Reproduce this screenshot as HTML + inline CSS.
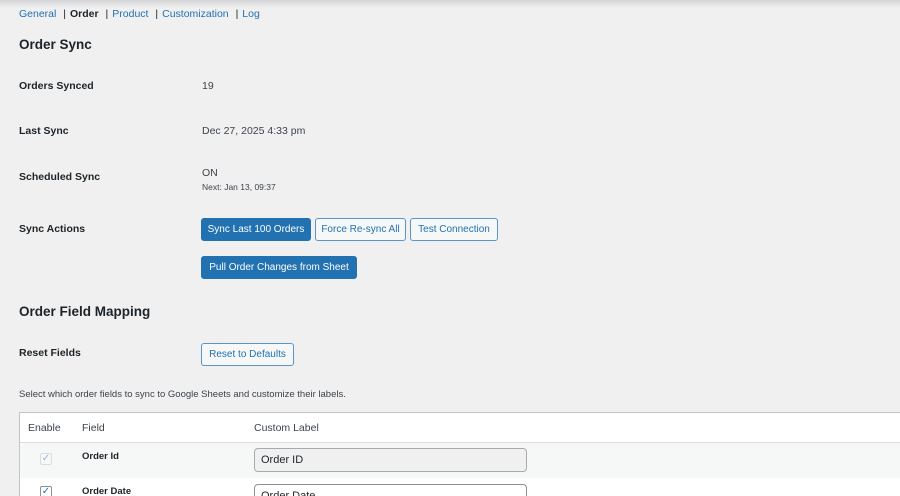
<!DOCTYPE html>
<html style="overflow:hidden;height:496px"><head><meta charset="utf-8"><style>
*{box-sizing:border-box;margin:0;padding:0}
body{width:900px;height:496px;overflow:hidden;background:#f0f0f1;font-family:"Liberation Sans",sans-serif;color:#1d2327;font-size:11px;position:relative}
.shadow{position:absolute;left:0;top:0;width:900px;height:8px;background:linear-gradient(#d4d4d6,#f0f0f1)}
.a{position:absolute;white-space:nowrap}
.nav{top:8px;left:19px;font-size:10.5px;color:#2271b1}
.nav b{color:#1d2327}
.nav .s{color:#1d2327;margin:0 4px}
h2{position:absolute;font-size:13.5px;font-weight:bold;left:19px}
.lbl{left:19px;font-weight:bold;font-size:10.5px}
.val{left:202px;font-size:10.5px;color:#3c434a}
.btn{position:absolute;height:23px;border:1px solid #5a94c8;border-radius:3px;font-size:10px;line-height:21px;text-align:center;color:#2271b1;background:#f6f7f7;white-space:nowrap}
.p{background:#2271b1;color:#fff;border-color:#2271b1}
.tbl{position:absolute;left:19px;top:412px;width:890px;height:100px;border:1px solid #c3c4c7;background:#fff}
.r1{position:absolute;left:0;top:29px;width:100%;height:36px;background:#f6f7f7;border-top:1px solid #dcdcde}
.inp{position:absolute;left:234px;width:273px;height:24px;border:1px solid #8c8f94;border-radius:4px;font-size:11px;padding-left:6px;line-height:22px}
.cb{position:absolute;left:20px;width:12px;height:12px;border:1px solid #8c8f94;border-radius:2px;font-size:10px;line-height:10px;text-align:center;color:#2271b1;background:#fff}
</style></head><body>
<div class="shadow"></div>
<div class="a nav">General <span class="s">|</span><b>Order</b> <span class="s"> |</span>Product <span class="s"> |</span>Customization <span class="s"> |</span>Log</div>
<h2 style="top:37px">Order Sync</h2>
<div class="a lbl" style="top:80px">Orders Synced</div><div class="a val" style="top:80px">19</div>
<div class="a lbl" style="top:125px">Last Sync</div><div class="a val" style="top:125px">Dec 27, 2025 4:33 pm</div>
<div class="a lbl" style="top:171px">Scheduled Sync</div><div class="a val" style="top:167px">ON</div>
<div class="a val" style="top:182px;font-size:8.5px;color:#3c434a">Next: Jan 13, 09:37</div>
<div class="a lbl" style="top:223px">Sync Actions</div>
<div class="btn p" style="left:201px;top:218px;width:110px">Sync Last 100 Orders</div>
<div class="btn" style="left:315px;top:218px;width:91px">Force Re-sync All</div>
<div class="btn" style="left:410px;top:218px;width:88px">Test Connection</div>
<div class="btn p" style="left:201px;top:256px;width:156px">Pull Order Changes from Sheet</div>
<h2 style="top:304px">Order Field Mapping</h2>
<div class="a lbl" style="top:347px">Reset Fields</div>
<div class="btn" style="left:201px;top:343px;width:93px">Reset to Defaults</div>
<div class="a" style="left:19px;top:389px;font-size:9.5px;color:#3c434a">Select which order fields to sync to Google Sheets and customize their labels.</div>
<div class="tbl">
<div class="a" style="left:8px;top:9px;font-size:10.5px;color:#3c434a">Enable</div>
<div class="a" style="left:62px;top:9px;font-size:10.5px;color:#3c434a">Field</div>
<div class="a" style="left:234px;top:9px;font-size:10.5px;color:#3c434a">Custom Label</div>
<div class="r1">
<div class="cb" style="top:10px;border-color:#dcdcde;color:#8fb8d9;background:#f6f7f7">✓</div>
<div class="a" style="left:62px;top:8px;font-weight:bold;font-size:9.5px">Order Id</div>
<div class="inp" style="top:5px;background:#f0f0f1;border-color:#a7aaad">Order ID</div>
</div>
<div class="cb" style="top:73px">✓</div>
<div class="a" style="left:62px;top:73px;font-weight:bold;font-size:9.5px">Order Date</div>
<div class="inp" style="top:71px">Order Date</div>
</div>
</body></html>
